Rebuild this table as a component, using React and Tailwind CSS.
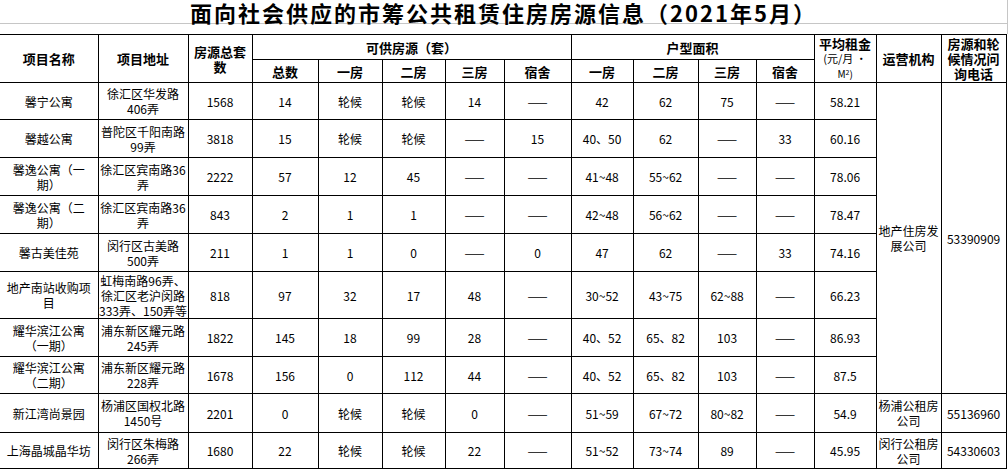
import React from "react";

const COLS = [98, 90, 64, 66, 64, 63, 59, 67, 62, 65, 58, 58, 62, 65, 65];

// 每行: 名称, 地址, 总套数, 可供(总数/一房/二房/三房/宿舍), 面积(一房/二房/三房/宿舍), 租金
const ROWS = [
  { h: 37, name: ["馨宁公寓"], addr: ["徐汇区华发路", "406弄"], total: "1568", supply: ["14", "轮候", "轮候", "14", "——"], area: ["42", "62", "75", "——"], rent: "58.21" },
  { h: 38, name: ["馨越公寓"], addr: ["普陀区千阳南路", "99弄"], total: "3818", supply: ["15", "轮候", "轮候", "——", "15"], area: ["40、50", "62", "——", "33"], rent: "60.16" },
  { h: 38, name: ["馨逸公寓（一", "期）"], addr: ["徐汇区宾南路36", "弄"], total: "2222", supply: ["57", "12", "45", "——", "——"], area: ["41~48", "55~62", "——", "——"], rent: "78.06" },
  { h: 38, name: ["馨逸公寓（二", "期）"], addr: ["徐汇区宾南路36", "弄"], total: "843", supply: ["2", "1", "1", "——", "——"], area: ["42~48", "56~62", "——", "——"], rent: "78.47" },
  { h: 38, name: ["馨古美佳苑"], addr: ["闵行区古美路", "500弄"], total: "211", supply: ["1", "1", "0", "——", "0"], area: ["47", "62", "——", "33"], rent: "74.16" },
  { h: 47, name: ["地产南站收购项", "目"], addr: ["虹梅南路96弄、", "徐汇区老沪闵路", "333弄、150弄等"], total: "818", supply: ["97", "32", "17", "48", "——"], area: ["30~52", "43~75", "62~88", "——"], rent: "66.23" },
  { h: 38, name: ["耀华滨江公寓", "（一期）"], addr: ["浦东新区耀元路", "245弄"], total: "1822", supply: ["145", "18", "99", "28", "——"], area: ["40、52", "65、82", "103", "——"], rent: "86.93" },
  { h: 37, name: ["耀华滨江公寓", "（二期）"], addr: ["浦东新区耀元路", "228弄"], total: "1678", supply: ["156", "0", "112", "44", "——"], area: ["40、52", "65、82", "103", "——"], rent: "87.5" },
  { h: 39, name: ["新江湾尚景园"], addr: ["杨浦区国权北路", "1450号"], total: "2201", supply: ["0", "轮候", "轮候", "0", "——"], area: ["51~59", "67~72", "80~82", "——"], rent: "54.9", org: ["杨浦公租房", "公司"], tel: "55136960" },
  { h: 36, name: ["上海晶城晶华坊"], addr: ["闵行区朱梅路", "266弄"], total: "1680", supply: ["22", "轮候", "轮候", "22", "——"], area: ["51~52", "73~74", "89", "——"], rent: "45.95", org: ["闵行公租房", "公司"], tel: "54330603" },
];

const td = "border border-black p-0 text-center align-middle text-[12px] leading-[15px] font-normal";
const th = "border border-black p-0 text-center align-middle text-[13px] leading-[15px] font-bold";

function Lines({ items }) {
  return items.map((t, i) => (
    <div key={i} className="whitespace-nowrap">
      {t}
    </div>
  ));
}

export default function App() {
  return (
    <div className="w-[1008px] bg-white text-black" style={{ fontFamily: '"Noto Sans CJK SC", "Noto Sans", sans-serif' }}>
      <div className="h-[24px] border-b border-r border-[#c6c6c6] text-center text-[22px] leading-[24px] font-bold tracking-[2px]">
        面向社会供应的市筹公共租赁住房房源信息（2021年5月）
      </div>
      <div className="h-[10px] border-r border-[#c6c6c6]" />
      <table className="table-fixed border-collapse w-[1006px]">
        <colgroup>
          {COLS.map((w, i) => (
            <col key={i} style={{ width: w }} />
          ))}
        </colgroup>
        <thead>
          <tr className="h-[25px]">
            <th rowSpan={2} className={th + " border-l-0"}>项目名称</th>
            <th rowSpan={2} className={th}>项目地址</th>
            <th rowSpan={2} className={th}>
              <div>房源总套</div>
              <div>数</div>
            </th>
            <th colSpan={5} className={th}>可供房源（套）</th>
            <th colSpan={4} className={th}>户型面积</th>
            <th rowSpan={2} className={th + " leading-[14px]"}>
              <div>平均租金</div>
              <div className="font-normal text-[11px]">(元/月 •</div>
              <div className="font-normal text-[10px]">
                M<sup className="text-[7px]">2</sup>)
              </div>
            </th>
            <th rowSpan={2} className={th}>运营机构</th>
            <th rowSpan={2} className={th + " leading-[14px]"}>
              <div>房源和轮</div>
              <div>候情况问</div>
              <div>询电话</div>
            </th>
          </tr>
          <tr className="h-[23px]">
            {["总数", "一房", "二房", "三房", "宿舍", "一房", "二房", "三房", "宿舍"].map((t, i) => (
              <th key={i} className={th}>{t}</th>
            ))}
          </tr>
        </thead>
        <tbody>
          {ROWS.map((r, i) => (
            <tr key={i} style={{ height: r.h }}>
              <td className={td + " border-l-0"}>
                <Lines items={r.name} />
              </td>
              <td className={td}>
                <Lines items={r.addr} />
              </td>
              <td className={td}>{r.total}</td>
              {r.supply.map((v, j) => (
                <td key={"s" + j} className={td}>{v}</td>
              ))}
              {r.area.map((v, j) => (
                <td key={"a" + j} className={td}>{v}</td>
              ))}
              <td className={td}>{r.rent}</td>
              {i === 0 && (
                <>
                  <td rowSpan={8} className={td}>
                    <Lines items={["地产住房发", "展公司"]} />
                  </td>
                  <td rowSpan={8} className={td}>53390909</td>
                </>
              )}
              {r.org && (
                <>
                  <td className={td}>
                    <Lines items={r.org} />
                  </td>
                  <td className={td}>{r.tel}</td>
                </>
              )}
            </tr>
          ))}
        </tbody>
      </table>
    </div>
  );
}
